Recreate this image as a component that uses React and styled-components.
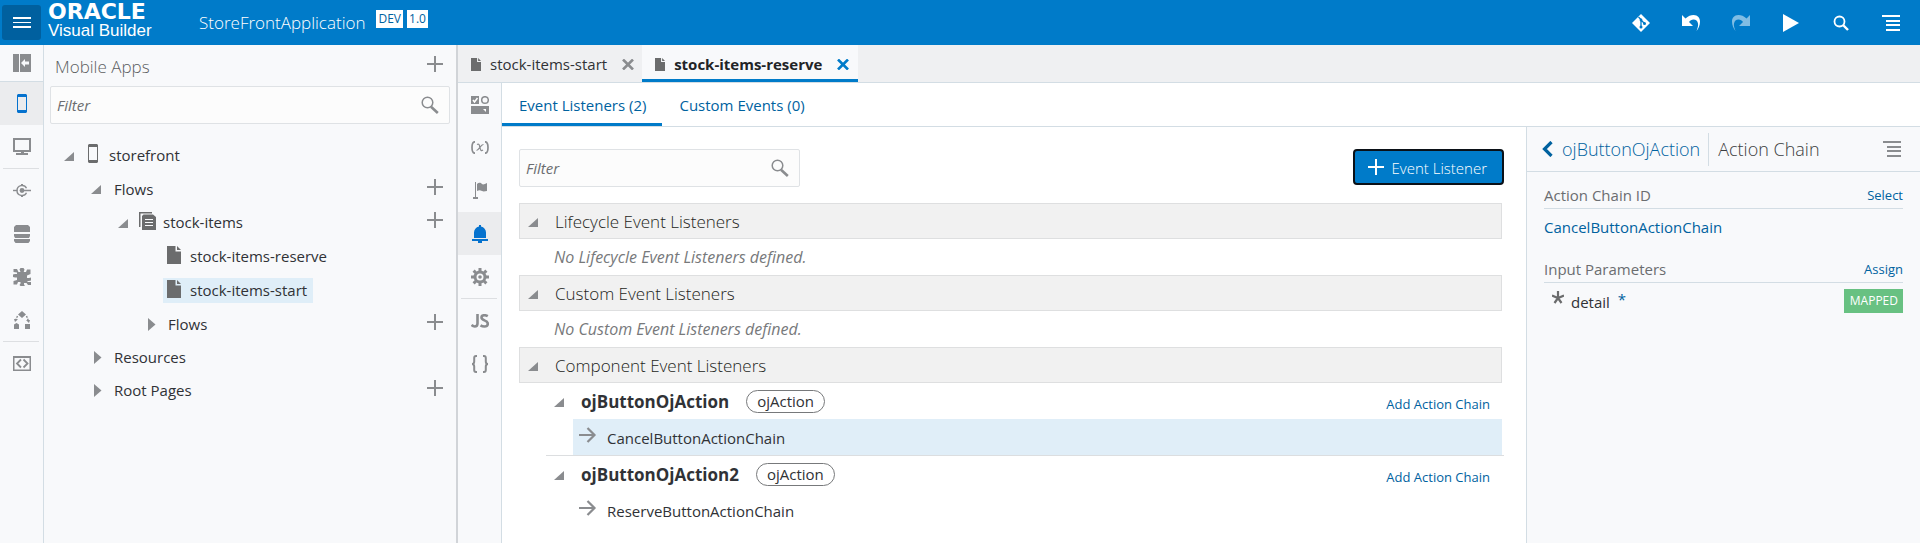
import React from "react";
import styled, { createGlobalStyle, css } from "styled-components";

const blue = "#007bc9";
const link = "#00629f";
const line = "#d3dde4";
const grey = "#8a8c8f";
const ink = "#303236";
const panel = "#f8f9fb";

const Global = createGlobalStyle`
  *, *::before, *::after { box-sizing: border-box; }
  html, body, #root { height: 100%; }
  body {
    margin: 0;
    background: #fff;
    color: ${ink};
    font: 400 15px/20px "Open Sans", "Noto Sans", sans-serif;
  }
  button, input { font: inherit; color: inherit; }
  button { border: 0; padding: 0; background: none; cursor: pointer; }
  svg { display: block; flex: none; }
  a { color: ${link}; text-decoration: none; }
  h1, h2, h3, ul, p { margin: 0; padding: 0; font-size: inherit; font-weight: inherit; list-style: none; }
`;

const Page = styled.div`
  min-height: 100%;
  display: flex;
  flex-direction: column;
`;

/* ---------- header ---------- */
const Header = styled.header`
  height: 45px;
  flex: none;
  display: flex;
  align-items: center;
  background: ${blue};
  color: #fff;
`;
const MenuButton = styled.button`
  width: 39px;
  height: 35px;
  margin: 0 7px 0 2px;
  border-radius: 3px;
  background: #00609f;
  display: grid;
  place-items: center;
`;
const Brand = styled.div`
  width: 151px;
  padding-bottom: 4px;
  display: flex;
  flex-direction: column;
  font-family: "Liberation Sans", Arial, sans-serif;
  font-size: 17px;
  font-weight: 400;
  line-height: 18px;
`;
const BrandMark = styled.span`
  font-family: "DejaVu Sans", sans-serif;
  font-size: 22px;
  font-weight: 700;
  line-height: 20px;
`;
const AppName = styled.h1`
  font-size: 17px;
  font-weight: 300;
  line-height: 24px;
`;
const Badges = styled.div`
  display: flex;
  gap: 4px;
  margin: 0 auto 8px 11px;
`;
const Badge = styled.span`
  height: 18px;
  padding: 0 2px;
  background: #fff;
  color: ${link};
  font-size: 12px;
  line-height: 18px;
`;
const HeaderActions = styled.div`
  display: flex;
  gap: 31px;
  padding-right: 20px;
`;
const HeaderButton = styled.button`
  width: 19px;
  height: 19px;
  display: grid;
  place-items: center;
  color: #fff;
  &:disabled { opacity: 0.5; }
`;

/* ---------- frame ---------- */
const Body = styled.div`
  flex: 1;
  display: flex;
`;
const Rail = styled.nav`
  width: 44px;
  flex: none;
  background: ${panel};
  border-right: 1px solid ${line};
`;
const RailButton = styled.button`
  width: 100%;
  height: ${(p) => (p.$top ? "37px" : "43px")};
  display: grid;
  place-items: center;
  color: ${(p) => (p.$active ? "#0572ce" : grey)};
  background: ${(p) => (p.$active ? "#ebecee" : "transparent")};
  border-bottom: ${(p) => (p.$top ? `1px solid ${line}` : "0")};
`;
const RailRule = styled.hr`
  margin: 0 4px 0 3px;
  border: 0;
  border-top: 1px solid #dddfe2;
`;

/* ---------- navigator ---------- */
const Navigator = styled.aside`
  width: 414px;
  flex: none;
  background: ${panel};
  border-right: 2px solid #d1d4d8;
`;
const NavTitle = styled.div`
  height: 41px;
  display: flex;
  align-items: center;
  justify-content: space-between;
  padding: 0 13px 0 11px;
  color: #5c5e61;
  h2 { padding-top: 2px; font-size: 17px; font-weight: 300; }
`;
const FilterBox = styled.label`
  width: ${(p) => (p.$wide ? "auto" : "281px")};
  height: 38px;
  margin: ${(p) => (p.$wide ? "0 6px" : "0")};
  padding: 0 10px 0 6px;
  display: flex;
  align-items: center;
  background: #fcfcfc;
  border: 1px solid #dfe2e5;
  border-radius: 2px;
  color: ${grey};
  input {
    flex: 1;
    min-width: 0;
    padding: 0;
    border: 0;
    outline: 0;
    background: none;
    font-size: 15px;
    font-style: italic;
  }
  input::placeholder { color: #6b6d70; opacity: 1; }
`;
const Tree = styled.ul`
  padding-top: 14px;
`;
const TreeRow = styled.li`
  height: ${(p) => (p.$folder ? "33px" : "34px")};
  display: flex;
  align-items: center;
  padding-right: 13px;
  padding-left: ${(p) => p.$indent}px;
`;
const Twisty = styled.button`
  width: ${(p) => p.$width || 20}px;
  height: 20px;
  flex: none;
  padding-top: 2px;
  display: flex;
  align-items: center;
  color: ${grey};
`;
const TreeLabel = styled.a`
  height: 25px;
  display: flex;
  align-items: center;
  gap: ${(p) => p.$gap || 9}px;
  padding: 0 6px 0 4px;
  margin-right: auto;
  color: ${ink};
  background: ${(p) => (p.$selected ? "#dfeef8" : "transparent")};
  svg { color: #6b6c6d; margin-bottom: 3px; }
`;
const PlusButton = styled.button`
  color: ${grey};
  margin-bottom: 4px;
`;

/* ---------- editor ---------- */
const Editor = styled.main`
  flex: 1;
  min-width: 0;
  display: flex;
  flex-direction: column;
`;
const Tabs = styled.div`
  height: 38px;
  flex: none;
  display: flex;
  background: #eff0f2;
  border-bottom: 1px solid ${line};
`;
const Tab = styled.div`
  display: flex;
  align-items: center;
  padding: 1px 8px 0 13px;
  color: #6b6c6d;
  ${(p) =>
    p.$active &&
    css`
      background: ${panel};
      border-bottom: 3px solid ${blue};
      padding: 4px 9px 0 13px;
      font-weight: 700;
    `}
  a { color: ${(p) => (p.$active ? "#222427" : ink)}; margin: 0 15px 0 9px; }
  button { color: ${(p) => (p.$active ? blue : grey)}; }
`;
const EditorBody = styled.div`
  flex: 1;
  display: flex;
`;
const Work = styled.div`
  flex: 1;
  min-width: 0;
  display: flex;
  flex-direction: column;
`;
const SubTabs = styled.div`
  height: 44px;
  flex: none;
  display: flex;
  border-bottom: 1px solid ${line};
`;
const SubTab = styled.a`
  padding: 3px 16px 0 17px;
  line-height: 38px;
  border-bottom: 3px solid ${(p) => (p.$active ? blue : "transparent")};
`;
const Columns = styled.div`
  flex: 1;
  display: flex;
`;
const Listeners = styled.section`
  flex: 1;
  min-width: 0;
  padding: 22px 24px 14px 17px;
`;
const Toolbar = styled.div`
  display: flex;
  justify-content: space-between;
  margin: 0 -2px 16px 0;
`;
const PrimaryButton = styled.button`
  height: 36px;
  padding: 2px 15px 0 13px;
  display: flex;
  align-items: center;
  gap: 8px;
  color: #fff;
  font-weight: 300;
  background: ${blue};
  border: 2px solid #0b1117;
  border-radius: 4px;
  svg { margin-bottom: 3px; }
`;
const SectionBar = styled.div`
  height: 36px;
  padding: 0 8px;
  display: flex;
  align-items: center;
  background: #f1f1f1;
  border: 1px solid #dedfe0;
  h2 { padding-top: 1px; font-size: 17px; font-weight: 300; color: #1d1f22; }
`;
const Empty = styled.p`
  padding: 0 35px;
  font-size: 16px;
  line-height: 36px;
  font-style: italic;
  color: #77797b;
`;
const Group = styled.div`
  margin: 0 -2px 0 27px;
  padding-right: 2px;
  & + & { border-top: 1px solid #dcdee0; }
`;
const GroupHead = styled.div`
  height: 36px;
  display: flex;
  align-items: center;
  padding: 0 12px 0 8px;
  h3 { padding-top: 2px; font-size: 17px; font-weight: 700; margin-right: 17px; }
  > a { padding-top: 6px; }
`;
const Pill = styled.span`
  height: 23px;
  padding: 0 10px;
  line-height: 21px;
  border: 1px solid #77797b;
  border-radius: 12px;
  margin-right: auto;
`;
const SmallLink = styled.a`
  font-size: 13px;
`;
const Chain = styled.a`
  height: 36px;
  margin-left: 27px;
  padding-left: 6px;
  display: flex;
  align-items: center;
  gap: 10px;
  color: ${ink};
  background: ${(p) => (p.$selected ? "#e0eef8" : "transparent")};
  svg { color: ${grey}; margin-bottom: 4px; }
  span { padding-top: 2px; }
`;

/* ---------- properties ---------- */
const Properties = styled.aside`
  width: 394px;
  flex: none;
  background: ${panel};
  border-left: 1px solid ${line};
`;
const Crumbs = styled.div`
  height: 45px;
  display: flex;
  align-items: center;
  padding: 0 19px 0 15px;
  border-bottom: 1px solid ${line};
  font-size: 18px;
  font-weight: 300;
  a { display: flex; align-items: center; gap: 9px; }
  h2 {
    margin: 0 auto 0 8px;
    padding-left: 9px;
    line-height: 33px;
    border-left: 1px solid ${line};
    color: #3b3d40;
  }
  button { color: ${grey}; }
`;
const Field = styled.div`
  margin: 0 17px;
  height: 37px;
  padding-top: 10px;
  display: flex;
  align-items: center;
  justify-content: space-between;
  border-bottom: 1px solid ${line};
  color: #6b6d70;
`;
const Value = styled.div`
  height: 37px;
  margin: 0 17px;
  line-height: 36px;
`;
const Param = styled.div`
  height: 35px;
  margin: 0 17px 0 25px;
  display: flex;
  align-items: center;
  span { padding-top: 2px; }
  svg { color: #6b6c6d; margin: 0 7px 6px 0; }
  i { margin: 0 auto 4px 8px; font-style: normal; color: ${link}; }
`;
const Mapped = styled.strong`
  height: 24px;
  padding: 0 5px 0 6px;
  background: #68c182;
  color: #fff;
  font-size: 12px;
  font-weight: 400;
  line-height: 24px;
`;

/* ---------- icons ---------- */
const Svg = ({ w = 18, h = w, children, ...rest }) => (
  <svg width={w} height={h} viewBox={`0 0 ${w} ${h}`} fill="currentColor" aria-hidden="true" {...rest}>
    {children}
  </svg>
);
const Plus = () => <Svg w={16}><path d="M7 0h2v7h7v2H9v7H7V9H0V7h7z" /></Svg>;
const Search = () => (
  <Svg>
    <circle cx="6.500" cy="6.500" r="5.300" fill="none" stroke="currentColor" strokeWidth="1.500" />
    <path d="M10 10.800 16.800 17" stroke="currentColor" strokeWidth="2.600" />
  </Svg>
);
const Open = () => <Svg w={10} h={9}><path d="M10 0v9H0z" /></Svg>;
const Closed = () => <Svg w={8} h={13}><path d="M0 0v13l7.500-6.500z" /></Svg>;
const Phone = () => (
  <Svg w={10} h={19}>
    <path fillRule="evenodd" d="M1 0h8l1 1v17l-1 1H1l-1-1V1zM1 3v13h8V3z" />
  </Svg>
);
const Doc = ({ small }) => (
  <svg width={small ? 10 : 14} height={small ? 13 : 18} viewBox="0 0 14 18" fill="currentColor" aria-hidden="true">
    <path d="M0 0h8.500v5.500H14V18H0zM10 0l4 4h-4z" />
  </svg>
);
const Docs = () => (
  <Svg w={17} h={18}>
    <path d="M0 0h13v1.500H1.500V15H0z" />
    <path fillRule="evenodd" d="M4.500 2.500H14L17 5v13H3V4zM6 7v1h8V7zm0 3v1h8v-1zm0 3v1h8v-1z" />
  </Svg>
);
const Close = () => (
  <Svg w={12} h={11}><path d="M1 .5l10 10M11 .5l-10 10" stroke="currentColor" strokeWidth="2.600" /></Svg>
);
const Lines = () => <Svg w={18} h={16}><path d="M0 0h18v2H0zM4 5h14v2H4zM4 9h14v2H4zM4 14h14v2H4z" /></Svg>;
const Arrow = () => (
  <Svg w={18} h={16}><path d="M0 8h15.500M8.500 1l7 7-7 7" fill="none" stroke="currentColor" strokeWidth="2.200" /></Svg>
);
const Collapse = () => (
  <Svg><path d="M0 0h6v18H0z" /><path fillRule="evenodd" d="M7 0h11v18H7zM8 9l4 4v-2.500h4v-3h-4V5z" /></Svg>
);
const Monitor = () => (
  <Svg w={18} h={17}><path fillRule="evenodd" d="M0 0h18v14H0zM2 2v10h14V2zM8 14h3v1h4v2H3v-2h5z" /></Svg>
);
const Service = () => (
  <Svg w={18} h={13}>
    <path d="M0 6.500h4.500" stroke="currentColor" strokeWidth="1.400" />
    <circle cx="9" cy="6.500" r="2.400" />
    <path d="M4 6.500a5 5 0 0 1 9.500-2.200M4 6.500a5 5 0 0 0 9.500 2.200M9 6.500h9" fill="none" stroke="currentColor" strokeWidth="1.400" />
    <path d="M8 0h2v2H8zM8 11h2v2H8z" />
  </Svg>
);
const Database = () => (
  <Svg w={16} h={18}>
    <path d="M2 0h12l2 2v5H0V2zM0 9h16v2l-1 2H1l-1-2zM0 14h16v2l-1.500 2h-13L0 16z" />
  </Svg>
);
const Puzzle = () => (
  <Svg>
    <path d="M6.500 1.500 7.500 0h3l1 1.500-.8 2.500H13l1-2.500h3.500V6L14 7.500V10h2l2-.5v3l-2 .5h-2l1 1h3v3h-3l-1.500-2H11v1.500l1 1L11 18H7.500l-1-1L7.500 15.500V14H5l-1 2.500H.5V13L4 12V9.500H2L0 9V6.500L2 6h2V4.500L.5 4V1H4l1.500 3h2z" />
  </Svg>
);
const Process = () => (
  <Svg>
    <path d="M9 0l4 3.500L9 7 5 3.500zM1 13.500 3.500 12 6 13.500V18H1zM12 13h5v5h-5z" />
    <path d="M4.500 5 2.500 9.500M13.500 5l2 5" fill="none" stroke="currentColor" strokeWidth="1.400" strokeDasharray="2 1" />
    <path d="M1 8h4l-3 3zM13 9h4l-1 3z" />
  </Svg>
);
const Source = () => (
  <Svg w={18} h={15}>
    <path fillRule="evenodd" d="M0 0h18v15H0zM1.500 2v11.500h15V2z" />
    <path d="M8 3.500 4 7.500l4 4M10.500 3.500l4 4-4 4" fill="none" stroke="currentColor" strokeWidth="1.800" />
  </Svg>
);
const Components = () => (
  <Svg>
    <path d="M0 0h8v8H0z" /><path d="M2 4l1.500 2L6.500 2" stroke="#fff" fill="none" strokeWidth="1.500" />
    <circle cx="14" cy="4" r="3.300" fill="none" stroke="currentColor" strokeWidth="1.500" />
    <path d="M0 10h18v8H0z" /><path d="M12 13h3v3z" fill="#fff" />
  </Svg>
);
const Variables = () => (
  <Svg w={18} h={13}>
    <path d="M4 .8C2 .8 1 2.500 1 6.500s1 5.700 3 5.700M14 .8c2 0 3 1.700 3 5.700s-1 5.700-3 5.700" fill="none" stroke="currentColor" strokeWidth="1.700" />
    <path d="M6 3.500c2-1 2.500.5 3 3s1 4 3 2.500M12.500 3.500C10 3 8 9.500 5.500 9.500" fill="none" stroke="currentColor" strokeWidth="1.200" />
  </Svg>
);
const Flag = () => (
  <Svg w={14} h={17}>
    <path d="M2 0h1v15H2zM0 15h5v2H0zM4 2c2-2 4-1 5 0s3 0 5-1v8c-2 0-3 1-5 0s-3-1-5 0z" />
  </Svg>
);
const Bell = () => (
  <Svg w={16} h={18}><path d="M7 0h2v1.500c3 .8 5 3 5 6V13H2V7.500c0-3 2-5.200 5-6zM0 14h16v2h-6v2H6v-2H0z" /></Svg>
);
const Gear = () => (
  <Svg>
    <circle cx="9" cy="9" r="5" fill="none" stroke="currentColor" strokeWidth="3" />
    <circle cx="9" cy="9" r="1.800" />
    <path d="M9 0v3.500M9 14.500V18M0 9h3.500M14.500 9H18M2.600 2.600 5 5M13 13l2.400 2.400M2.600 15.400 5 13M13 5l2.400-2.400" stroke="currentColor" strokeWidth="3" />
  </Svg>
);
const Script = () => (
  <Svg w={18} h={14}>
    <path d="M6.500 0v9.500q0 3-2.800 3Q2 12.500.5 11M16.800 2.200q-1.600-1-3.300-1-3 0-3 2.300 0 1.600 3 2.900 3.300 1.300 3.300 3.300 0 2.800-3.300 2.800-2.200 0-4-1.200" fill="none" stroke="currentColor" strokeWidth="2.600" />
  </Svg>
);
const Braces = () => (
  <Svg>
    <path d="M6 1H5Q3.200 1 3.200 3v3.500Q3.200 9 1 9q2.200 0 2.200 2.500V15q0 2 1.800 2h1M12 1h1q1.800 0 1.800 2v3.500Q14.800 9 17 9q-2.200 0-2.200 2.500V15q0 2-1.800 2h-1" fill="none" stroke="currentColor" strokeWidth="2" />
  </Svg>
);
const Git = () => (
  <Svg>
    <path d="M9 0l9 9-9 9-9-9z" />
    <path d="M6.500 3 9 5.500V14M9 6l4 4" fill="none" stroke={blue} strokeWidth="1.300" />
    <circle cx="9" cy="6" r="1.400" fill={blue} /><circle cx="9" cy="13" r="1.500" fill={blue} /><circle cx="12.500" cy="9.500" r="1.500" fill={blue} />
  </Svg>
);
const Undo = ({ flip }) => (
  <Svg w={18} h={16}>
    <path transform={flip ? "translate(18 0) scale(-1 1)" : undefined} d="M0 0l3.500 3.500C6 1 9 0 11.500 0 16 0 18 3 18 6.500c0 4-1.500 7-3.500 9.500 1-3 2-5 1.500-7.500C15.500 6 14 4.500 11.500 4.500 9.500 4.500 8 5.500 7 7l4 4H0z" />
  </Svg>
);
const Play = () => <Svg w={16} h={18}><path d="M0 0l16 9-16 9z" /></Svg>;
const HeaderSearch = () => (
  <Svg w={16} h={16}>
    <circle cx="6.500" cy="6.500" r="5" fill="none" stroke="currentColor" strokeWidth="1.800" />
    <path d="M10 10l5 5" stroke="currentColor" strokeWidth="2.400" />
  </Svg>
);
const Back = () => <Svg w={11} h={16}><path d="M9.500 1 2.500 8l7 7" fill="none" stroke="currentColor" strokeWidth="3.200" /></Svg>;
const Star = () => (
  <Svg w={12} h={13}>
    <path d="M6 0v7M0 4.500 6 7l6-2.500M2.500 12 6 7l3.500 5" fill="none" stroke="currentColor" strokeWidth="2.200" />
  </Svg>
);

/* ---------- data ---------- */
const tree = [
  { label: "storefront", indent: 20, open: true, twisty: 20, icon: <Phone />, gap: 11 },
  { label: "Flows", indent: 47, open: true, folder: true, twisty: 19, add: true },
  { label: "stock-items", indent: 74, open: true, icon: <Docs />, twisty: 17, gap: 7, add: true },
  { label: "stock-items-reserve", indent: 119, leaf: true, icon: <Doc /> },
  { label: "stock-items-start", indent: 119, leaf: true, icon: <Doc />, selected: true },
  { label: "Flows", indent: 104, folder: true, twisty: 16, add: true },
  { label: "Resources", indent: 50, folder: true, twisty: 16 },
  { label: "Root Pages", indent: 50, folder: true, twisty: 16, add: true },
];
const rail = [
  ["Mobile apps", Phone, true], ["Web apps", Monitor], null, ["Services", Service], ["Business objects", Database],
  ["Components", Puzzle], ["Processes", Process], null, ["Source", Source],
];
const pageRail = [
  ["Page designer", Components], ["Variables", Variables], ["Actions", Flag], ["Event listeners", Bell, true],
  ["Settings", Gear], null, ["JavaScript", Script], ["Metadata", Braces],
];
const sections = [
  ["Lifecycle Event Listeners", "No Lifecycle Event Listeners defined."],
  ["Custom Event Listeners", "No Custom Event Listeners defined."],
  ["Component Event Listeners", null],
];
const groups = [
  ["ojButtonOjAction", "CancelButtonActionChain", true],
  ["ojButtonOjAction2", "ReserveButtonActionChain", false],
];

const RailItems = ({ items }) =>
  items.map((item, i) => {
    if (!item) return <RailRule key={i} />;
    const [name, Icon, active] = item;
    return <RailButton key={name} aria-label={name} $active={active}><Icon /></RailButton>;
  });

export default function App() {
  return (
    <Page>
      <Global />
      <Header>
        <MenuButton aria-label="Menu">
          <Svg w={18} h={11}><path d="M0 0h18v2H0zM0 5h18v1H0zM0 9h18v2H0z" /></Svg>
        </MenuButton>
        <Brand><BrandMark>ORACLE</BrandMark><span>Visual Builder</span></Brand>
        <AppName>StoreFrontApplication</AppName>
        <Badges><Badge>DEV</Badge><Badge>1.0</Badge></Badges>
        <HeaderActions>
          <HeaderButton aria-label="Git"><Git /></HeaderButton>
          <HeaderButton aria-label="Undo"><Undo /></HeaderButton>
          <HeaderButton aria-label="Redo" disabled><Undo flip /></HeaderButton>
          <HeaderButton aria-label="Preview"><Play /></HeaderButton>
          <HeaderButton aria-label="Search"><HeaderSearch /></HeaderButton>
          <HeaderButton aria-label="Options"><Lines /></HeaderButton>
        </HeaderActions>
      </Header>
      <Body>
        <Rail aria-label="Application">
          <RailButton $top aria-label="Collapse"><Collapse /></RailButton>
          <RailItems items={rail} />
        </Rail>
        <Navigator>
          <NavTitle><h2>Mobile Apps</h2><PlusButton aria-label="Add app"><Plus /></PlusButton></NavTitle>
          <FilterBox $wide><input placeholder="Filter" aria-label="Filter apps" /><Search /></FilterBox>
          <Tree>
            {tree.map((n, i) => (
              <TreeRow key={i} $indent={n.indent} $folder={n.folder}>
                {!n.leaf && <Twisty $width={n.twisty} aria-label="Toggle">{n.open ? <Open /> : <Closed />}</Twisty>}
                <TreeLabel href="#" $selected={n.selected} $gap={n.gap}>{n.icon}<span>{n.label}</span></TreeLabel>
                {n.add && <PlusButton aria-label={`Add to ${n.label}`}><Plus /></PlusButton>}
              </TreeRow>
            ))}
          </Tree>
        </Navigator>
        <Editor>
          <Tabs>
            <Tab><Doc small /><a href="#">stock-items-start</a><button aria-label="Close"><Close /></button></Tab>
            <Tab $active><Doc small /><a href="#">stock-items-reserve</a><button aria-label="Close"><Close /></button></Tab>
          </Tabs>
          <EditorBody>
            <Rail aria-label="Page"><RailItems items={pageRail} /></Rail>
            <Work>
              <SubTabs>
                <SubTab href="#" $active>Event Listeners (2)</SubTab>
                <SubTab href="#">Custom Events (0)</SubTab>
              </SubTabs>
              <Columns>
                <Listeners>
                  <Toolbar>
                    <FilterBox><input placeholder="Filter" aria-label="Filter listeners" /><Search /></FilterBox>
                    <PrimaryButton><Plus />Event Listener</PrimaryButton>
                  </Toolbar>
                  {sections.map(([title, empty]) => (
                    <React.Fragment key={title}>
                      <SectionBar><Twisty $width={27} aria-label="Toggle"><Open /></Twisty><h2>{title}</h2></SectionBar>
                      {empty && <Empty>{empty}</Empty>}
                    </React.Fragment>
                  ))}
                  {groups.map(([name, chain, selected]) => (
                    <Group key={name}>
                      <GroupHead>
                        <Twisty $width={27} aria-label="Toggle"><Open /></Twisty>
                        <h3>{name}</h3>
                        <Pill>ojAction</Pill>
                        <SmallLink href="#">Add Action Chain</SmallLink>
                      </GroupHead>
                      <Chain href="#" $selected={selected}><Arrow /><span>{chain}</span></Chain>
                    </Group>
                  ))}
                </Listeners>
                <Properties>
                  <Crumbs>
                    <a href="#"><Back />ojButtonOjAction</a>
                    <h2>Action Chain</h2>
                    <button aria-label="Panel options"><Lines /></button>
                  </Crumbs>
                  <Field><span>Action Chain ID</span><SmallLink href="#">Select</SmallLink></Field>
                  <Value><a href="#">CancelButtonActionChain</a></Value>
                  <Field><span>Input Parameters</span><SmallLink href="#">Assign</SmallLink></Field>
                  <Param><Star /><span>detail</span><i>*</i><Mapped>MAPPED</Mapped></Param>
                </Properties>
              </Columns>
            </Work>
          </EditorBody>
        </Editor>
      </Body>
    </Page>
  );
}
